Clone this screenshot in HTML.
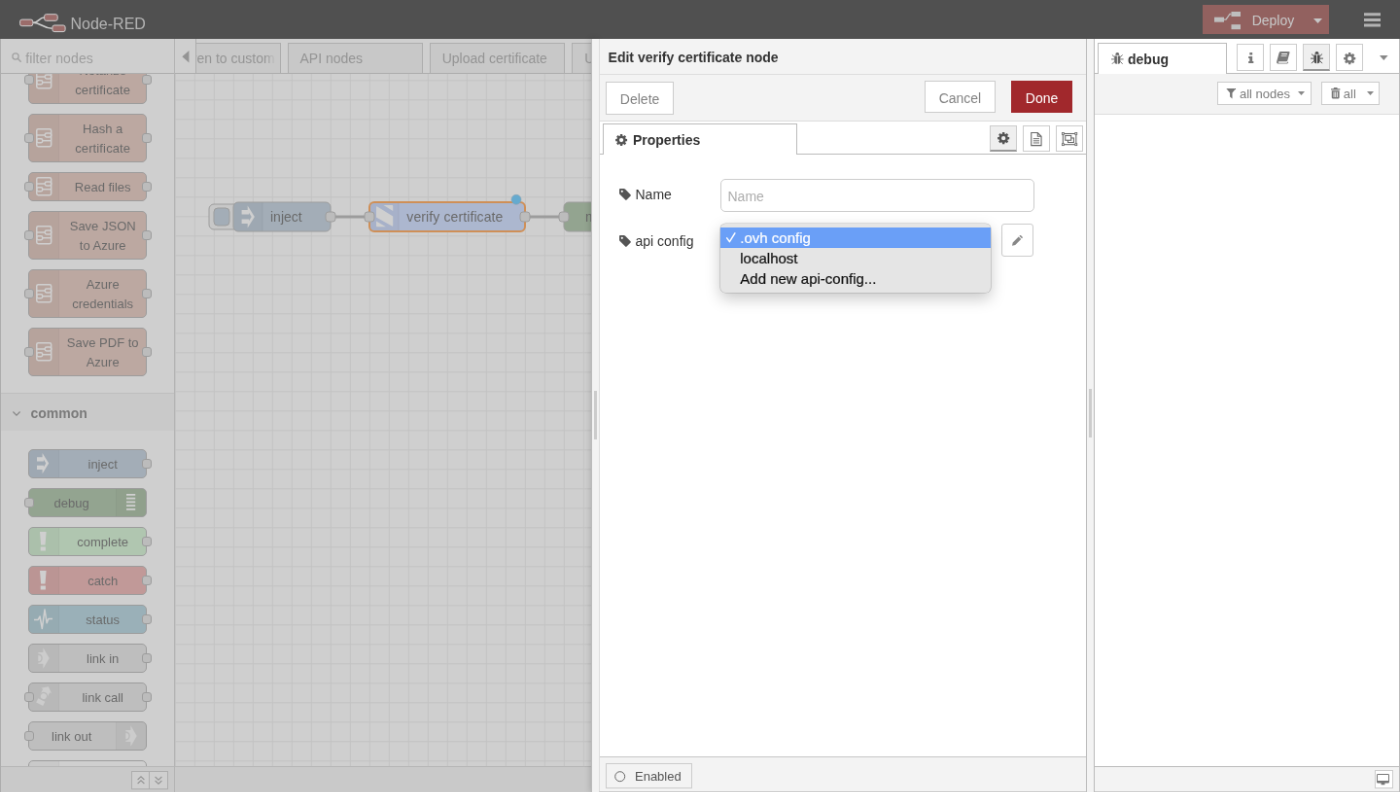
<!DOCTYPE html>
<html lang="en">
<head>
<meta charset="utf-8">
<title>Node-RED</title>
<style>
*{box-sizing:border-box}
html,body{margin:0;padding:0;width:1400px;height:792px;overflow:hidden;background:#fff}
body{font-family:"Liberation Sans",Arial,Helvetica,sans-serif;font-size:14px;color:#333}
#root{position:absolute;left:0;top:0;width:1440px;height:814.63px;transform:scale(.972222);transform-origin:0 0;overflow:hidden;background:#fff;will-change:transform}
.abs{position:absolute}
svg{display:block;overflow:visible}
/* header */
#header{position:absolute;left:0;top:0;width:1440px;height:40px;background:#000;color:#c7c7c7}
#logo-text{position:absolute;left:72.5px;top:15px;font-size:16px;line-height:20px;color:#c7c7c7;white-space:nowrap}
#deploy{position:absolute;left:1236.7px;top:5px;width:130.5px;height:30px;background:#84221f;color:#eee}
#deploy span{position:absolute;left:51px;top:5.9px;line-height:20px;font-size:14px}
.shade{position:absolute;background:rgba(160,160,160,.5);z-index:50}
/* palette */
#palette{position:absolute;left:0;top:40px;width:180px;bottom:0;background:#f3f3f3;border:1px solid #bbb;border-right-color:#c8c8c8;border-top:none;border-bottom:none;overflow:hidden}
#psearch{position:absolute;left:0;top:0;width:178px;height:35.8px;background:#fff;border-bottom:1px solid #bbb;z-index:5}
#psearch span{position:absolute;left:25.2px;top:9.9px;letter-spacing:.1px;font-size:14px;line-height:20px;color:#999}
#pscroll{position:absolute;left:0;top:35px;width:178px;bottom:26px;overflow:hidden;background:#fff}
.pcat-h{position:absolute;left:0;width:178px;height:39.5px;background:#f3f3f3;border-top:1px solid #ddd;font-weight:bold;color:#555}
.pcat-h span{position:absolute;left:30.5px;top:10.3px;line-height:20px}
.pn{position:absolute;left:27.7px;width:122px;border:1px solid #999;border-radius:5px;font-size:13px;line-height:20px;color:#333;text-align:center}
.pn .ic{position:absolute;left:0;top:0;bottom:0;width:31px;background:rgba(0,0,0,.05);border-right:1px solid rgba(0,0,0,.05);border-radius:4px 0 0 4px}
.pn.r .ic{left:auto;right:0;border-right:none;border-left:1px solid rgba(0,0,0,.05);border-radius:0 4px 4px 0}
.pn .lb{margin:5px 0 3px 32px;white-space:pre-line}
.pn.r .lb{margin:5px 32px 3px 0}
.pn .pi,.pn .po{position:absolute;width:10px;height:10px;background:#d9d9d9;border:1px solid #999;border-radius:3px;top:50%;margin-top:-5px}
.pn .pi{left:-5.2px}
.pn .po{right:-6.4px}
.pn svg{position:absolute}
#pfoot{position:absolute;left:0;bottom:0;width:178px;height:27px;background:#f3f3f3;border-top:1px solid #cdcdcd}
.fbtn{position:absolute;top:4.6px;width:19px;height:18.3px;background:#fff;border:1px solid #bbb}
/* workspace */
#ws{position:absolute;left:179px;top:40px;width:939px;bottom:0;background:#fff;border-left:1px solid #c8c8c8;overflow:hidden}
#wstabs{position:absolute;left:0;top:0;width:100%;height:36px;background:#fff;border-bottom:1px solid #bbb}
.wtab{position:absolute;top:4.4px;height:30.6px;width:139.5px;background:#f0f0f0;border:1px solid #bbb;border-bottom:none;color:#888;line-height:20px;white-space:nowrap;overflow:hidden}
.wtab span{position:absolute;left:12px;top:5px}
#wscroll{position:absolute;left:0;top:0;width:21.5px;height:36px;background:#fff;border-right:1px solid #bbb;border-bottom:1px solid #bbb;z-index:3}
#chart{position:absolute;left:0;top:36px;right:0;bottom:27px;overflow:hidden;background-color:#fff;
background-image:linear-gradient(#eee,#eee),linear-gradient(#eee,#eee);background-size:20px 1px,1px 20px;background-repeat:repeat;background-position:0 7.7px,0 0}
#chart{background-image:linear-gradient(to bottom,#e5e5e5 1px,transparent 1px),linear-gradient(to right,#e5e5e5 1px,transparent 1px);background-size:20px 20px,20px 20px;background-position:0 6.3px,-.2px 0}
#wsfoot{position:absolute;left:0;bottom:0;width:100%;height:27px;background:#f3f3f3;border-top:1px solid #cdcdcd}
/* tray */
#handle{position:absolute;left:608.1px;top:40px;width:8px;bottom:0;background:#f3f3f3;border-left:1px solid #bbb;box-shadow:-1px 0 6px rgba(0,0,0,.16);z-index:60}
#handle i{position:absolute;left:2px;top:362px;width:3px;height:50px;background:#ccc}
#tray{position:absolute;left:616.1px;top:40px;width:501.9px;bottom:0;background:#fff;border-left:1px solid #ddd;border-right:1px solid #bbb;border-bottom:1px solid #bbb;z-index:61}
#ttitle{position:absolute;left:0;top:0;width:100%;height:36.8px;background:#f3f3f3;border-bottom:1px solid #ddd;font-weight:bold;color:#333}
#ttitle span{position:absolute;left:8.5px;top:9px;line-height:20px;white-space:nowrap}
#ttool{position:absolute;left:0;top:36.8px;width:100%;height:48px;background:#f3f3f3;border-bottom:1px solid #ddd}
.btn{position:absolute;height:33.4px;border:1px solid #ccc;background:#fff;color:#828282;text-align:center;line-height:34.6px;font-size:14px}
.btn.primary{background:#a1282c;border-color:#a1282c;color:#fff}
#ttabs{position:absolute;left:0;top:84.8px;width:100%;height:34.2px;background:#fff;border-bottom:1px solid #bbb}
#ptab{position:absolute;left:3.1px;top:2px;width:200.1px;height:32.2px;background:#fff;border:1px solid #bbb;border-bottom:none;font-weight:bold;color:#333}
#ptab span{position:absolute;left:29.8px;top:6.2px;line-height:20px}
.tbtn{position:absolute;top:3.9px;width:27.5px;height:27px;border:1px solid #ccc;background:#fff}
.tbtn.sel{background:#efefef;border-bottom:2px solid #999}
.tbtn svg{position:absolute}
.flabel{position:absolute;left:19.4px;line-height:20px;color:#333;white-space:nowrap}
.flabel span{position:absolute;left:17px;top:0}
#name-in{position:absolute;left:123.9px;top:144.4px;width:322.6px;height:33.6px;border:1px solid #ccc;border-radius:5px;background:#fff}
#name-in span{position:absolute;left:6.5px;top:6.5px;line-height:20px;color:#adadad}
#sel{position:absolute;left:123.9px;top:191px;width:276px;height:34px;border:1px solid #ccc;border-radius:5px;background:#fff}
#editb{position:absolute;left:413.2px;top:190.1px;width:32.7px;height:33.6px;border:1px solid #ccc;background:#fff;border-radius:3px}
#pop{position:absolute;left:124px;top:189.8px;width:278.2px;height:71.6px;background:#e5e5e5;border-radius:5.5px;box-shadow:0 0 0 .6px rgba(0,0,0,.22),0 6px 16px rgba(0,0,0,.22);font-size:15px;color:#111;z-index:5}
#pop .hl{position:absolute;left:0;top:4.6px;width:100%;height:20.6px;background:#6a9ff7}
#pop span{position:absolute;left:20.2px;margin-top:1px;-webkit-text-stroke:.22px currentColor;line-height:20px;white-space:nowrap}
#tfoot{position:absolute;left:0;bottom:0;width:100%;height:36px;background:#f3f3f3;border-top:1px solid #c6c6c6}
#enb{position:absolute;left:6.4px;top:6.6px;width:88.5px;height:25.5px;border:1px solid #ccc;background:#f3f3f3;font-size:13px;color:#555}
#enb span{position:absolute;left:28.5px;top:3.1px;line-height:20px}
/* sidebar */
#sep{position:absolute;left:1118px;top:40px;width:7px;bottom:0;background:#f3f3f3;z-index:40}
#sep i{position:absolute;left:2px;top:359.7px;width:3px;height:50px;background:#ccc}
#sb{position:absolute;left:1125px;top:40px;width:315px;bottom:0;background:#fff;border-left:1px solid #bbb;border-right:1px solid #bbb;border-bottom:1px solid #bbb;z-index:40}
#sbtabs{position:absolute;left:0;top:0;width:313px;height:35.5px;border-bottom:1px solid #bbb;background:#fff}
#dtab{position:absolute;left:3px;top:3.8px;width:132.5px;height:32px;border:1px solid #bbb;border-bottom:none;background:#fff;font-weight:bold;color:#333}
#dtab span{position:absolute;left:30px;top:5.8px;line-height:20px}
.sbtn{position:absolute;top:4.9px;width:27.9px;height:27.8px;border:1px solid #ccc;background:#fff}
.sbtn.sel{background:#efefef;border-bottom:2px solid #999}
.sbtn svg{position:absolute}
#sbtool{position:absolute;left:0;top:35.5px;width:313px;height:42.3px;background:#f3f3f3;border-bottom:1px solid #ddd}
.hbtn{position:absolute;top:8.6px;height:24.4px;border:1px solid #ccc;background:#fff;font-size:13px;color:#7c7c7c;line-height:20px}
.hbtn span{position:absolute;top:2.4px}
#sbfoot{position:absolute;left:0;bottom:0;width:313px;height:26px;background:#f3f3f3;border-top:1px solid #bbb}
</style>
</head>
<body>
<div id="root">

<!-- HEADER -->
<div id="header">
  <svg class="abs" style="left:19px;top:13px" width="50" height="21" viewBox="0 0 50 21">
    <path d="M15 10.3 C21 10.3 21 5 26.5 5 M15 10.3 C23 10.3 25 16.2 34.5 16.2" fill="none" stroke="#fff" stroke-width="1.6"/>
    <rect x="1.6" y="7.1" width="13.2" height="6.6" rx="2" fill="#963834" stroke="#fff" stroke-width="1"/>
    <rect x="26.6" y="1.7" width="13.6" height="6.6" rx="2" fill="#963834" stroke="#fff" stroke-width="1"/>
    <rect x="34.9" y="13" width="13.2" height="6.6" rx="2" fill="#963834" stroke="#fff" stroke-width="1"/>
  </svg>
  <div id="logo-text">Node-RED</div>
  <div id="deploy">
    <svg class="abs" style="left:12px;top:7.4px" width="27" height="18.2" viewBox="0 0 27 18.2">
      <rect x="0" y="5.7" width="10" height="5" fill="#ddd"/><rect x="17.5" y="0" width="9.5" height="5" fill="#ddd"/><rect x="17.5" y="13.2" width="9.5" height="5" fill="#ddd"/>
      <path d="M10 8.2 H12 L16 2.5 H17.5" fill="none" stroke="#ddd" stroke-width="1.3"/>
    </svg>
    <span>Deploy</span>
    <svg class="abs" style="left:114px;top:13.5px" width="9" height="5" viewBox="0 0 9 5"><path d="M0 0H9L4.5 5Z" fill="#eee"/></svg>
  </div>
  <svg class="abs" style="left:1402.7px;top:12.6px" width="17" height="15" viewBox="0 0 17 15"><path d="M0 .3H17V3.3H0ZM0 5.9H17V8.9H0ZM0 11.5H17V14.5H0Z" fill="#c7c7c7"/></svg>
</div>

<!-- PALETTE -->
<div id="palette">
  <div id="pscroll">
    <div class="pn" style="top:-18.3px;height:50px;background:#d8b0a2"><div class="ic"><svg style="left:7.2px;top:50%;margin-top:-9.7px" width="16.4" height="19.4" viewBox="0 0 16.4 19.4"><g fill="none" stroke="#fff" stroke-width="1.5"><rect x=".75" y=".75" width="14.9" height="17.9" rx="1.6"/><path d="M.75 7H9.3"/><rect x="9.3" y="5" width="6.4" height="3.9" rx="1.6"/><rect x=".75" y="10.8" width="6" height="3.9" rx="1.6"/><path d="M6.8 12.7H15.6"/></g></svg></div><div class="lb">Notarize
<span style="letter-spacing:.13px">certificate</span></div><i class="pi"></i><i class="po"></i></div>
<div class="pn" style="top:41.7px;height:50px;background:#d8b0a2"><div class="ic"><svg style="left:7.2px;top:50%;margin-top:-9.7px" width="16.4" height="19.4" viewBox="0 0 16.4 19.4"><g fill="none" stroke="#fff" stroke-width="1.5"><rect x=".75" y=".75" width="14.9" height="17.9" rx="1.6"/><path d="M.75 7H9.3"/><rect x="9.3" y="5" width="6.4" height="3.9" rx="1.6"/><rect x=".75" y="10.8" width="6" height="3.9" rx="1.6"/><path d="M6.8 12.7H15.6"/></g></svg></div><div class="lb">Hash a
<span style="letter-spacing:.13px">certificate</span></div><i class="pi"></i><i class="po"></i></div>
<div class="pn" style="top:101.7px;height:30px;background:#d8b0a2"><div class="ic"><svg style="left:7.2px;top:50%;margin-top:-9.7px" width="16.4" height="19.4" viewBox="0 0 16.4 19.4"><g fill="none" stroke="#fff" stroke-width="1.5"><rect x=".75" y=".75" width="14.9" height="17.9" rx="1.6"/><path d="M.75 7H9.3"/><rect x="9.3" y="5" width="6.4" height="3.9" rx="1.6"/><rect x=".75" y="10.8" width="6" height="3.9" rx="1.6"/><path d="M6.8 12.7H15.6"/></g></svg></div><div class="lb">Read files</div><i class="pi"></i><i class="po"></i></div>
<div class="pn" style="top:141.7px;height:50px;background:#d8b0a2"><div class="ic"><svg style="left:7.2px;top:50%;margin-top:-9.7px" width="16.4" height="19.4" viewBox="0 0 16.4 19.4"><g fill="none" stroke="#fff" stroke-width="1.5"><rect x=".75" y=".75" width="14.9" height="17.9" rx="1.6"/><path d="M.75 7H9.3"/><rect x="9.3" y="5" width="6.4" height="3.9" rx="1.6"/><rect x=".75" y="10.8" width="6" height="3.9" rx="1.6"/><path d="M6.8 12.7H15.6"/></g></svg></div><div class="lb">Save JSON
to Azure</div><i class="pi"></i><i class="po"></i></div>
<div class="pn" style="top:201.7px;height:50px;background:#d8b0a2"><div class="ic"><svg style="left:7.2px;top:50%;margin-top:-9.7px" width="16.4" height="19.4" viewBox="0 0 16.4 19.4"><g fill="none" stroke="#fff" stroke-width="1.5"><rect x=".75" y=".75" width="14.9" height="17.9" rx="1.6"/><path d="M.75 7H9.3"/><rect x="9.3" y="5" width="6.4" height="3.9" rx="1.6"/><rect x=".75" y="10.8" width="6" height="3.9" rx="1.6"/><path d="M6.8 12.7H15.6"/></g></svg></div><div class="lb">Azure
credentials</div><i class="pi"></i><i class="po"></i></div>
<div class="pn" style="top:261.7px;height:50px;background:#d8b0a2"><div class="ic"><svg style="left:7.2px;top:50%;margin-top:-9.7px" width="16.4" height="19.4" viewBox="0 0 16.4 19.4"><g fill="none" stroke="#fff" stroke-width="1.5"><rect x=".75" y=".75" width="14.9" height="17.9" rx="1.6"/><path d="M.75 7H9.3"/><rect x="9.3" y="5" width="6.4" height="3.9" rx="1.6"/><rect x=".75" y="10.8" width="6" height="3.9" rx="1.6"/><path d="M6.8 12.7H15.6"/></g></svg></div><div class="lb">Save PDF to
Azure</div><i class="pi"></i><i class="po"></i></div>
<div class="pcat-h" style="top:328.8px"><svg class="abs" style="left:12px;top:17.8px" width="8" height="5" viewBox="0 0 8 5"><path d="M.4 .5L4 4.1L7.6 .5" fill="none" stroke="#666" stroke-width="1.1"/></svg><span>common</span></div>
<div class="pn" style="top:386.6px;height:30px;background:#a6bbcf"><div class="ic"><svg style="left:8.6px;top:50%;margin-top:-10.6px" width="12.2" height="21.2" viewBox="0 0 12.2 21.2"><path fill="#fff" d="M0 4.2H5.6V0L12.2 10.6L5.6 21.2V17H0V12.8H6.9V14.6L9.3 10.6L6.9 6.6V8.4H0Z"/></svg></div><div class="lb">inject</div><i class="po"></i></div>
<div class="pn r" style="top:426.6px;height:30px;background:#87a980"><div class="ic"><svg style="left:10.6px;top:50%;margin-top:-8.4px" width="9.2" height="16.8" viewBox="0 0 9.2 16.8"><path fill="#fff" d="M0 0H9.2V1.8H0ZM0 3.75H9.2V5.55H0ZM0 7.5H9.2V9.3H0ZM0 11.25H9.2V13.05H0ZM0 15H9.2V16.8H0Z"/></svg></div><div class="lb">debug</div><i class="pi"></i></div>
<div class="pn" style="top:466.6px;height:30px;background:#c0edc0"><div class="ic"><svg style="left:11.6px;top:50%;margin-top:-9.8px" width="6.6" height="19.6" viewBox="0 0 6.6 19.6"><path fill="#fff" d="M0 0H6.6L5.5 13.6H1.1ZM.7 15.4H5.9V19.6H.7Z"/></svg></div><div class="lb">complete</div><i class="po"></i></div>
<div class="pn" style="top:506.6px;height:30px;background:#e29390"><div class="ic"><svg style="left:11.6px;top:50%;margin-top:-9.8px" width="6.6" height="19.6" viewBox="0 0 6.6 19.6"><path fill="#fff" d="M0 0H6.6L5.5 13.6H1.1ZM.7 15.4H5.9V19.6H.7Z"/></svg></div><div class="lb">catch</div><i class="po"></i></div>
<div class="pn" style="top:546.6px;height:30px;background:#94c1d0"><div class="ic"><svg style="left:5.2px;top:50%;margin-top:-10.8px" width="19" height="21.6" viewBox="0 0 19 21.6"><path fill="none" stroke="#fff" stroke-width="1.5" stroke-linejoin="round" d="M0 11.4H4.2L6 8L8.3 20.5L11 1L13.2 14.8L14.8 10.6H19"/></svg></div><div class="lb">status</div><i class="po"></i></div>
<div class="pn" style="top:586.6px;height:30px;background:#ddd"><div class="ic"><svg style="left:0;top:0" width="30" height="28" viewBox="0 0 30 28"><g transform="translate(9,3.3)"><path fill="#fff" fill-opacity=".85" d="M.3 4.7H5.4V0L11.7 10.7L5.4 21.4V16.4H.3Z"/><path fill="#d2d2d2" d="M0 5.9A4.8 4.8 0 0 1 0 15.5Z"/><path fill="#fff" fill-opacity=".85" d="M.3 7.6A3.1 3.1 0 0 1 .3 13.8Z"/></g></svg></div><div class="lb">link in</div><i class="po"></i></div>
<div class="pn" style="top:626.6px;height:30px;background:#ddd"><div class="ic"><svg style="left:0;top:0" width="30" height="28" viewBox="0 0 30 28"><g transform="translate(14.85,13.1) rotate(27)"><path fill="#fff" fill-opacity=".85" d="M0 -11L6 -6.2H3.9V0H-3.9V-6.2H-6ZM-3.9 4.45H3.9V9.15H-3.9Z"/><circle r="4.4" fill="#d2d2d2"/><circle r="3" fill="#fff" fill-opacity=".85"/></g></svg></div><div class="lb">link call</div><i class="pi"></i><i class="po"></i></div>
<div class="pn r" style="top:666.6px;height:30px;background:#ddd"><div class="ic"><svg style="left:0;top:0" width="30" height="28" viewBox="0 0 30 28"><g transform="translate(9,3.3)"><path fill="#fff" fill-opacity=".85" d="M.3 4.7H5.4V0L11.7 10.7L5.4 21.4V16.4H.3Z"/><path fill="#d2d2d2" d="M0 5.9A4.8 4.8 0 0 1 0 15.5Z"/><path fill="#fff" fill-opacity=".85" d="M.3 7.6A3.1 3.1 0 0 1 .3 13.8Z"/></g></svg></div><div class="lb">link out</div><i class="pi"></i></div>
<div class="pn" style="top:706.6px;height:30px;background:#fff"><div class="ic"></div><div class="lb">comment</div></div>

  </div>
  <div id="psearch">
    <svg class="abs" style="left:11px;top:13.5px" width="10" height="10" viewBox="0 0 10 10"><circle cx="4" cy="4" r="3.1" fill="none" stroke="#a2a2a2" stroke-width="1.25"/><path d="M6.3 6.3L9.2 9.2" stroke="#a2a2a2" stroke-width="1.5" stroke-linecap="round"/></svg>
    <span>filter nodes</span>
  </div>
  <div id="pfoot">
    <div class="fbtn" style="left:134.1px"><svg class="abs" style="left:4.5px;top:4px" width="8" height="9" viewBox="0 0 8 9"><path d="M.6 4L4 .8L7.4 4M.6 8L4 4.8L7.4 8" fill="none" stroke="#888" stroke-width="1.1"/></svg></div>
    <div class="fbtn" style="left:153.1px;border-left:none;width:18.5px"><svg class="abs" style="left:4.5px;top:4px" width="8" height="9" viewBox="0 0 8 9"><path d="M.6 1L4 4.2L7.4 1M.6 5L4 8.2L7.4 5" fill="none" stroke="#888" stroke-width="1.1"/></svg></div>
  </div>
</div>

<!-- WORKSPACE -->
<div id="ws">
  <div id="chart">
    <svg class="abs" style="left:0;top:0" width="940" height="714" viewBox="180 76 940 714">
<g font-family="Liberation Sans,Arial,sans-serif" font-size="14" fill="#333">
<path d="M340 223H380M540 223H580" stroke="#999" stroke-width="3" fill="none"/>
<rect x="215" y="210" width="32" height="26" rx="5" fill="#eee" stroke="#999"/><rect x="220" y="214" width="16" height="18" rx="4" fill="#a6bbcf" stroke="#999"/>
<rect x="240" y="208" width="100" height="30" rx="5" fill="#a6bbcf" stroke="#999"/><path d="M240.5 213a4.5 4.5 0 0 1 4.5-4.5H270v29H245a4.5 4.5 0 0 1-4.5-4.5Z" fill="rgba(0,0,0,.05)"/><path d="M270 208.5v29" stroke="rgba(0,0,0,.1)"/><path transform="translate(248.6,211.5) scale(1.085)" fill="#fff" d="M0 4.2H5.6V0L12.2 10.6L5.6 21.2V17H0V12.8H6.9V14.6L9.3 10.6L6.9 6.6V8.4H0Z"/><text x="278" y="228">inject</text><rect x="335" y="218" width="10" height="10" rx="3" fill="#d9d9d9" stroke="#999"/>
<rect x="380" y="208" width="160" height="30" rx="5" fill="#b9ceff" stroke="#ff7f0e" stroke-width="2"/><path d="M381 213a4 4 0 0 1 4-4H410v28H385a4 4 0 0 1-4-4Z" fill="rgba(0,0,0,.05)"/><path d="M410 209v28" stroke="rgba(0,0,0,.1)"/><g transform="translate(380,208)" fill="#fff"><path d="M14.5 3.1H23.4a.8 .8 0 0 1 .8 .8V8.9Z"/><path d="M7 5a.7 .7 0 0 1 1-.6L24.2 14.5V24a.7 .7 0 0 1-1 .6L7 15.4Z"/><path d="M7 19.5L16.9 25.3H7.8a.8 .8 0 0 1-.8-.8Z"/></g><text x="418.3" y="228" letter-spacing=".11">verify certificate</text><rect x="375" y="218" width="10" height="10" rx="3" fill="#d9d9d9" stroke="#999"/><rect x="535" y="218" width="10" height="10" rx="3" fill="#d9d9d9" stroke="#999"/><circle cx="531" cy="205.3" r="5" fill="#2ab4ff" stroke="#6ea3bd" stroke-width=".6"/>
<rect x="580" y="208" width="140" height="30" rx="5" fill="#87a980" stroke="#999"/><text x="602" y="228">msg.payload</text><rect x="575" y="218" width="10" height="10" rx="3" fill="#d9d9d9" stroke="#999"/>
</g></svg>

  </div>
  <div id="wstabs">
    <div class="wtab" style="left:-30.8px"><span style="left:27.4px">Driven to custom events</span><b style="position:absolute;right:0;top:0;width:15px;height:100%;background:linear-gradient(to right,rgba(240,240,240,0),#f0f0f0 75%)"></b></div>
<div class="wtab" style="left:115.5px"><span>API nodes</span></div>
<div class="wtab" style="left:261.7px"><span>Upload certificate</span></div>
<div class="wtab" style="left:408.2px"><span>Upload multiple</span></div>
<div id="wscroll"><svg class="abs" style="left:6.9px;top:12.2px" width="7.8" height="12.4" viewBox="0 0 6 10.5"><path d="M6 0V10.5L0 5.25Z" fill="#888"/></svg></div>

  </div>
  <div id="wsfoot"></div>
</div>

<!-- SHADES -->
<div class="shade" style="left:0;top:0;width:1440px;height:40px"></div>
<div class="shade" style="left:0;top:40px;width:1118px;bottom:0"></div>

<!-- TRAY -->
<div id="handle"><i></i></div>
<div id="tray">
  <div id="ttitle"><span>Edit verify certificate node</span></div>
<div id="ttool"><div class="btn" style="left:6.3px;top:7.3px;width:69.4px;height:34px;line-height:35px">Delete</div><div class="btn" style="left:333.6px;top:6.3px;width:73.5px">Cancel</div><div class="btn primary" style="left:423px;top:6.3px;width:63px">Done</div></div>
<div id="ttabs"><div id="ptab"><svg class="abs" style="left:11.6px;top:10.2px" width="12.2" height="12.2" viewBox="0 0 12 12"><path fill="#555" fill-rule="evenodd" d="M4.79 1.61L4.87 0.11L7.13 0.11L7.21 1.61L8.24 2.04L9.37 1.03L10.97 2.63L9.96 3.76L10.39 4.79L11.89 4.87L11.89 7.13L10.39 7.21L9.96 8.24L10.97 9.37L9.37 10.97L8.24 9.96L7.21 10.39L7.13 11.89L4.87 11.89L4.79 10.39L3.76 9.96L2.63 10.97L1.03 9.37L2.04 8.24L1.61 7.21L0.11 7.13L0.11 4.87L1.61 4.79L2.04 3.76L1.03 2.63L2.63 1.03L3.76 2.04ZM6 3.9A2.1 2.1 0 1 0 6 8.1A2.1 2.1 0 1 0 6 3.9Z"/></svg><span>Properties</span></div><div class="tbtn sel" style="left:400.6px;width:28.4px"><svg class="abs" style="left:7.4px;top:6.5px" width="12.3" height="12.3" viewBox="0 0 12 12"><path fill="#555" fill-rule="evenodd" d="M4.79 1.61L4.87 0.11L7.13 0.11L7.21 1.61L8.24 2.04L9.37 1.03L10.97 2.63L9.96 3.76L10.39 4.79L11.89 4.87L11.89 7.13L10.39 7.21L9.96 8.24L10.97 9.37L9.37 10.97L8.24 9.96L7.21 10.39L7.13 11.89L4.87 11.89L4.79 10.39L3.76 9.96L2.63 10.97L1.03 9.37L2.04 8.24L1.61 7.21L0.11 7.13L0.11 4.87L1.61 4.79L2.04 3.76L1.03 2.63L2.63 1.03L3.76 2.04ZM6 3.9A2.1 2.1 0 1 0 6 8.1A2.1 2.1 0 1 0 6 3.9Z"/></svg></div><div class="tbtn" style="left:435.3px"><svg style="left:7px;top:6px" width="11.8" height="14.2" viewBox="0 0 10.6 13.2"><path fill="none" stroke="#666" stroke-width="1" d="M.5 .5H6.6L10.1 4V12.7H.5ZM6.6 .5V4H10.1"/><path stroke="#666" stroke-width=".9" d="M2.4 6.2H8.2M2.4 8.2H8.2M2.4 10.2H8.2"/></svg></div><div class="tbtn" style="left:469.2px"><svg style="left:4.8px;top:6px" width="16.2" height="14.2" viewBox="0 0 15.6 13.4"><g fill="none" stroke="#666" stroke-width="1"><rect x="1.3" y="1.3" width="13" height="10.8"/><rect x="6.2" y="5.6" width="5.8" height="4.4" fill="#fff"/><rect x="3.6" y="3.2" width="5.8" height="4.6" fill="#fff"/></g><g fill="#fff" stroke="#666" stroke-width=".8"><rect x=".4" y=".4" width="1.9" height="1.9"/><rect x="13.3" y=".4" width="1.9" height="1.9"/><rect x=".4" y="11.1" width="1.9" height="1.9"/><rect x="13.3" y="11.1" width="1.9" height="1.9"/></g></svg></div></div>
<div class="flabel" style="top:150px"><svg class="abs" style="left:1px;top:4.2px" width="12" height="12" viewBox="0 0 12 12"><path fill="#555" fill-rule="evenodd" d="M0 .9A.9 .9 0 0 1 .9 0H4.7A2 2 0 0 1 6 .6L11.6 6.2A1 1 0 0 1 11.6 7.6L7.6 11.6A1 1 0 0 1 6.2 11.6L.6 6A2 2 0 0 1 0 4.7ZM2.8 1.7A1.1 1.1 0 1 0 2.8 3.9A1.1 1.1 0 1 0 2.8 1.7Z"/></svg><span>Name</span></div>
<div id="name-in"><span>Name</span></div>
<div class="flabel" style="top:198px"><svg class="abs" style="left:1px;top:4.2px" width="12" height="12" viewBox="0 0 12 12"><path fill="#555" fill-rule="evenodd" d="M0 .9A.9 .9 0 0 1 .9 0H4.7A2 2 0 0 1 6 .6L11.6 6.2A1 1 0 0 1 11.6 7.6L7.6 11.6A1 1 0 0 1 6.2 11.6L.6 6A2 2 0 0 1 0 4.7ZM2.8 1.7A1.1 1.1 0 1 0 2.8 3.9A1.1 1.1 0 1 0 2.8 1.7Z"/></svg><span>api config</span></div>
<div id="sel"></div>
<div id="editb"><svg class="abs" style="left:9.6px;top:11.4px" width="10.8" height="10.8" viewBox="0 0 10.6 10.6"><path fill="#888" d="M0 10.6L.7 7.4L6.6 1.5L9.1 4L3.2 9.9ZM7.3 .8L8 .1A.6 .6 0 0 1 8.8 .1L10.5 1.8A.6 .6 0 0 1 10.5 2.6L9.8 3.3Z"/></svg></div>
<div id="pop"><div class="hl"></div><svg class="abs" style="left:5.6px;top:9.4px" width="9.6" height="10.6" viewBox="0 0 9.6 10.6"><path d="M.7 5.9L3.4 9.6L8.9 .8" fill="none" stroke="#fff" stroke-width="1.5" stroke-linecap="round" stroke-linejoin="round"/></svg><span style="top:4.6px;color:#fff">.ovh config</span><span style="top:25.4px">localhost</span><span style="top:46px">Add new api-config...</span></div>
<div id="tfoot"><div id="enb"><svg class="abs" style="left:8px;top:6.8px" width="11.4" height="11.4" viewBox="0 0 11.4 11.4"><circle cx="5.7" cy="5.7" r="5" fill="none" stroke="#666" stroke-width="1"/></svg><span>Enabled</span></div></div>

</div>

<!-- SIDEBAR -->
<div id="sep"><i></i></div>
<div id="sb">
  <div id="sbtabs"><div id="dtab"><svg class="abs" style="left:13px;top:9px" width="12.6" height="12.6" viewBox="0 0 12.4 12.4"><path fill="#666" d="M4.3 1.9A1.9 1.9 0 0 1 8.1 1.9V2.6H4.3ZM3.2 3.4H5.8V11.6H5.2A2.2 2.2 0 0 1 3.2 9.6ZM6.6 3.4H9.2V9.6A2.2 2.2 0 0 1 7.2 11.6H6.6Z"/><path fill="none" stroke="#666" stroke-width=".9" d="M0 6.8H3.2M9.2 6.8H12.4M.9 2.4L3.2 4.6M11.5 2.4L9.2 4.6M.9 11.6L3.2 9.2M11.5 11.6L9.2 9.2"/></svg><span>debug</span></div><div class="sbtn" style="left:146px"><svg style="left:10.5px;top:8.2px" width="5.5" height="11" viewBox="0 0 6.6 13"><path fill="#777" d="M1.6 0H5V3H1.6ZM.2 4.8H5V10.6H6.4V13H.2V10.6H1.6V7.2H.2Z"/></svg></div><div class="sbtn" style="left:179.9px"><svg style="left:6.6px;top:7.4px" width="13.6" height="12.6" viewBox="0 0 13.6 12.6"><path fill="#7a7a7a" fill-rule="evenodd" d="M4.4 0H12.5A1 1 0 0 1 13.5 1.3L11.3 9.2A1.4 1.4 0 0 1 10 10.2H2.6A.8 .8 0 0 0 2.6 11.8H10.6L11.3 10.6L12.3 10.9L11.4 12.2A1 1 0 0 1 10.6 12.6H2.2A2 2 0 0 1 .2 10.2L2.6 1.4A1.9 1.9 0 0 1 4.4 0ZM5.3 2L5.05 2.9H10.9L11.15 2ZM4.8 3.9L4.55 4.8H10.4L10.65 3.9Z"/></svg></div><div class="sbtn sel" style="left:214.1px"><svg class="abs" style="left:6.6px;top:7px" width="13" height="13" viewBox="0 0 12.4 12.4"><path fill="#4a4a4a" d="M4.3 1.9A1.9 1.9 0 0 1 8.1 1.9V2.6H4.3ZM3.2 3.4H5.8V11.6H5.2A2.2 2.2 0 0 1 3.2 9.6ZM6.6 3.4H9.2V9.6A2.2 2.2 0 0 1 7.2 11.6H6.6Z"/><path fill="none" stroke="#4a4a4a" stroke-width=".9" d="M0 6.8H3.2M9.2 6.8H12.4M.9 2.4L3.2 4.6M11.5 2.4L9.2 4.6M.9 11.6L3.2 9.2M11.5 11.6L9.2 9.2"/></svg></div><div class="sbtn" style="left:248px"><svg class="abs" style="left:6.8px;top:7.8px" width="12.4" height="12.4" viewBox="0 0 12 12"><path fill="#777" fill-rule="evenodd" d="M4.79 1.61L4.87 0.11L7.13 0.11L7.21 1.61L8.24 2.04L9.37 1.03L10.97 2.63L9.96 3.76L10.39 4.79L11.89 4.87L11.89 7.13L10.39 7.21L9.96 8.24L10.97 9.37L9.37 10.97L8.24 9.96L7.21 10.39L7.13 11.89L4.87 11.89L4.79 10.39L3.76 9.96L2.63 10.97L1.03 9.37L2.04 8.24L1.61 7.21L0.11 7.13L0.11 4.87L1.61 4.79L2.04 3.76L1.03 2.63L2.63 1.03L3.76 2.04ZM6 3.9A2.1 2.1 0 1 0 6 8.1A2.1 2.1 0 1 0 6 3.9Z"/></svg></div><svg class="abs" style="left:292.6px;top:17.2px" width="8.6" height="5" viewBox="0 0 8 4.6"><path d="M0 0H8L4 4.6Z" fill="#888"/></svg></div>
<div id="sbtool"><div class="hbtn" style="left:126.4px;width:96.6px"><svg class="abs" style="left:7.8px;top:5.6px" width="10.6" height="10.6" viewBox="0 0 10 10.6"><path fill="#777" d="M0 0H10L6.2 4.6V10.6L3.8 8.4V4.6Z"/></svg><span style="left:21.6px">all nodes</span><svg class="abs" style="left:82px;top:9px" width="7" height="4" viewBox="0 0 7 4"><path d="M0 0H7L3.5 4Z" fill="#888"/></svg></div><div class="hbtn" style="left:233.4px;width:59.8px"><svg class="abs" style="left:8.2px;top:5.4px" width="9.4" height="11.4" viewBox="0 0 9 11"><path fill="#777" fill-rule="evenodd" d="M3 0H6L6.6 1.2H9V2.4H0V1.2H2.4ZM.7 3.2H8.3V10A1 1 0 0 1 7.3 11H1.7A1 1 0 0 1 .7 10ZM2.5 4.4V9.6H3.3V4.4ZM4.1 4.4V9.6H4.9V4.4ZM5.7 4.4V9.6H6.5V4.4Z"/></svg><span style="left:21.4px">all</span><svg class="abs" style="left:46px;top:9px" width="7" height="4" viewBox="0 0 7 4"><path d="M0 0H7L3.5 4Z" fill="#888"/></svg></div></div>
<div id="sbfoot"><div class="abs" style="left:287.8px;top:3.8px;width:18.9px;height:18.8px;border:1px solid #ccc;background:#fff"><svg class="abs" style="left:1.7px;top:3px" width="13" height="11.2" viewBox="0 0 13 11.2"><path fill="#777" fill-rule="evenodd" d="M1.2 0H11.8A1.2 1.2 0 0 1 13 1.2V8.3A1.2 1.2 0 0 1 11.8 9.5H1.2A1.2 1.2 0 0 1 0 8.3V1.2A1.2 1.2 0 0 1 1.2 0ZM1 1V7H12V1ZM4.6 9.5H8.4V11.2H4.6Z"/></svg></div></div>

</div>

</div>
</body>
</html>
